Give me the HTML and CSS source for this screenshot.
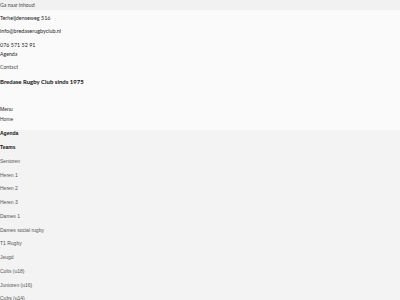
FILE: index.html
```html
<!DOCTYPE html>
<html lang="nl">
<head>
<meta charset="utf-8">
<title>Bredase Rugby Club</title>
<link rel="stylesheet" href="styles.css">
</head>
<body>
<div class="skip-bar"><a class="skip" href="#content">Ga naar inhoud</a></div>
<header class="site-header">
  <ul class="contact-info">
    <li class="info-item">Terheijdenseweg 516</li>
    <li class="info-item">info@bredaserugbyclub.nl</li>
    <li class="info-item">076 571 52 91</li>
  </ul>
  <ul class="top-nav">
    <li class="top-item strong">Agenda</li>
    <li class="top-item">Contact</li>
  </ul>
  <h1 class="site-title">Bredase Rugby Club sinds 1975</h1>
  <div class="menu-toggle">Menu</div>
  <div class="menu-home">Home</div>
</header>
<nav class="main-menu" id="content">
  <ul class="menu-list">
    <li class="menu-head">Agenda</li>
    <li class="menu-head">Teams</li>
    <li class="menu-item">Senioren</li>
    <li class="menu-item">Heren 1</li>
    <li class="menu-item">Heren 2</li>
    <li class="menu-item">Heren 3</li>
    <li class="menu-item">Dames 1</li>
    <li class="menu-item">Dames social rugby</li>
    <li class="menu-item">T1 Rugby</li>
    <li class="menu-item">Jeugd</li>
    <li class="menu-item">Colts (u18)</li>
    <li class="menu-item">Junioren (u16)</li>
    <li class="menu-item">Cubs (u14)</li>
    <li class="menu-item">Benjamins (u12)</li>
    <li class="menu-item">Mini's</li>
  </ul>
</nav>
</body>
</html>
```
FILE: styles.css
```css
html {
  background: #f3f3f3;
}
body {
  margin: 0;
  font-family: Lato, "Liberation Sans", sans-serif;
  color: #222;
}
ul {
  list-style: none;
  margin: 0;
  padding: 0;
}
.skip-bar {
  height: 10px;
  background: #f1f1f1;
}
.skip {
  display: block;
  font-size: 5.2px;
  line-height: 10px;
  color: #444;
  text-decoration: none;
}
.site-header {
  background: #fafafa;
  padding-top: 4.2px;
  padding-bottom: 6.5px;
}
.contact-info {
  display: flex;
  flex-direction: column;
  gap: 4.3px;
}
.info-item {
  font-size: 5.4px;
  line-height: 9px;
  color: #1e1e1e;
}
.top-nav {
  display: flex;
  flex-direction: column;
  gap: 4.5px;
}
.top-item {
  font-size: 5.2px;
  line-height: 9px;
  color: #444;
}
.top-item.strong {
  color: #1e1e1e;
}
.site-title {
  margin: 4.5px 0 0;
  font-size: 6px;
  line-height: 9px;
  font-weight: 700;
  color: #111;
}
.menu-toggle {
  margin-top: 19px;
  font-family: "Liberation Sans", Arial, sans-serif;
  font-size: 5px;
  line-height: 9px;
  color: #111;
}
.menu-home {
  font-family: "Liberation Sans", Arial, sans-serif;
  font-size: 5px;
  line-height: 10px;
  color: #333;
}
.main-menu {
  background: #f3f3f3;
}
.menu-list {
  display: flex;
  flex-direction: column;
  gap: 7.75px;
}
.menu-head,
.menu-item {
  font-family: "Liberation Sans", Arial, sans-serif;
  font-size: 5px;
  line-height: 6px;
}
.menu-head {
  color: #111;
  font-weight: 700;
}
.menu-item {
  color: #555;
}
```
